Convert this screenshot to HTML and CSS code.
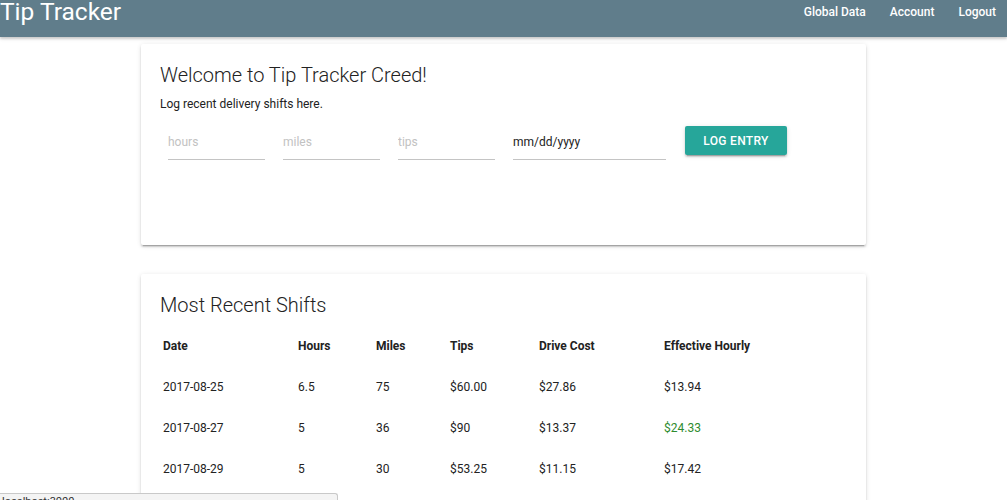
FILE: index.html
```html
<!DOCTYPE html>
<html>
<head>
<meta charset="utf-8">
<title>Tip Tracker</title>
<link rel="stylesheet" href="styles.css">
</head>
<body>
<nav class="navbar">
  <div class="brand">Tip Tracker</div>
  <ul class="nav-links">
    <li>Global Data</li>
    <li>Account</li>
    <li>Logout</li>
  </ul>
</nav>
<main class="container">
  <section class="card entry-card">
    <h2 class="card-title">Welcome to Tip Tracker Creed!</h2>
    <p class="subtitle">Log recent delivery shifts here.</p>
    <form class="entry-form">
      <input class="field" type="text" placeholder="hours">
      <input class="field" type="text" placeholder="miles">
      <input class="field" type="text" placeholder="tips">
      <input class="field field-date" type="text" value="mm/dd/yyyy">
      <button class="btn" type="button">LOG ENTRY</button>
    </form>
  </section>
  <section class="card shifts-card">
    <h2 class="card-title">Most Recent Shifts</h2>
    <div class="shift-table">
      <div class="row head">
        <span>Date</span><span>Hours</span><span>Miles</span><span>Tips</span><span>Drive Cost</span><span>Effective Hourly</span>
      </div>
      <div class="row">
        <span>2017-08-25</span><span>6.5</span><span>75</span><span>$60.00</span><span>$27.86</span><span>$13.94</span>
      </div>
      <div class="row">
        <span>2017-08-27</span><span>5</span><span>36</span><span>$90</span><span>$13.37</span><span class="good">$24.33</span>
      </div>
      <div class="row">
        <span>2017-08-29</span><span>5</span><span>30</span><span>$53.25</span><span>$11.15</span><span>$17.42</span>
      </div>
    </div>
  </section>
</main>
<div class="status-bubble">localhost:3000</div>
</body>
</html>
```

FILE: styles.css
```css
* { box-sizing: border-box; }
html, body { margin: 0; padding: 0; }
body {
  font-family: Roboto, "Liberation Sans", sans-serif;
  background: #fff;
  color: rgba(0,0,0,0.87);
  overflow: hidden;
  height: 500px;
  position: relative;
}
.navbar {
  height: 37px;
  background: #607d8b;
  display: flex;
  justify-content: space-between;
  align-items: flex-start;
  box-shadow: 0 2px 2px 0 rgba(0,0,0,0.14), 0 1px 5px 0 rgba(0,0,0,0.12);
  color: #fff;
}
.brand {
  font-size: 24.5px;
  line-height: 26px;
  margin-top: -1px;
}
.nav-links {
  list-style: none;
  margin: 0;
  padding: 4px 11px 0 0;
  display: flex;
  gap: 24px;
  font-size: 12px;
  font-weight: 500;
  line-height: 16px;
}
.container {
  width: 725px;
  height: 463px;
  margin: 7px auto 0;
  display: flex;
  flex-direction: column;
  gap: 29px;
}
.card {
  background: #fff;
  border-radius: 2px;
  box-shadow: 0 2px 2px 0 rgba(0,0,0,0.14), 0 1px 5px 0 rgba(0,0,0,0.12), 0 3px 1px -2px rgba(0,0,0,0.2);
  padding: 20px 19px;
}
.entry-card { height: 201px; flex: none; }
.shifts-card { flex: 1; min-height: 0; overflow: hidden; border-radius: 2px 2px 0 0; }
.card-title {
  margin: 0;
  font-size: 20px;
  font-weight: 300;
  line-height: 22px;
  color: #222;
}
.subtitle {
  margin: 10px 0 0;
  font-size: 12px;
  line-height: 16px;
  color: #222;
}
.entry-form {
  display: flex;
  align-items: flex-start;
  margin-top: 15px;
  padding-left: 8px;
}
.field {
  width: 97px;
  height: 33px;
  border: none;
  border-bottom: 1px solid #c4c4c4;
  outline: none;
  padding: 0 0 3px;
  margin-right: 18px;
  font-family: inherit;
  font-size: 12px;
  color: #222;
  background: transparent;
}
.field::placeholder { color: #c2c2c2; }
.field-date { width: 153px; margin-right: 19px; }
.btn {
  margin-top: -1px;
  width: 102px;
  height: 29px;
  border: none;
  border-radius: 2px;
  background: #26a69a;
  color: #fff;
  font-family: inherit;
  font-weight: 500;
  font-size: 12px;
  letter-spacing: 0.3px;
  box-shadow: 0 2px 2px 0 rgba(0,0,0,0.14), 0 1px 5px 0 rgba(0,0,0,0.12), 0 3px 1px -2px rgba(0,0,0,0.2);
}
.shift-table {
  margin-top: 9px;
  padding-left: 3px;
}
.row {
  display: grid;
  grid-template-columns: 135px 78px 74px 89px 125px 1fr;
  height: 41px;
  align-items: center;
  font-size: 12px;
  color: #222;
}
.row.head { font-weight: 700; }
.good { color: #2e8b2e; }
.status-bubble {
  position: absolute;
  left: 0;
  top: 493px;
  width: 338px;
  height: 7px;
  overflow: hidden;
  background: #f4f4f4;
  border: 1px solid #c9c9c9;
  border-left: none;
  border-bottom: none;
  border-radius: 0 3px 0 0;
  font-size: 11px;
  line-height: 16px;
  padding-left: 2px;
  color: #333;
}
```
